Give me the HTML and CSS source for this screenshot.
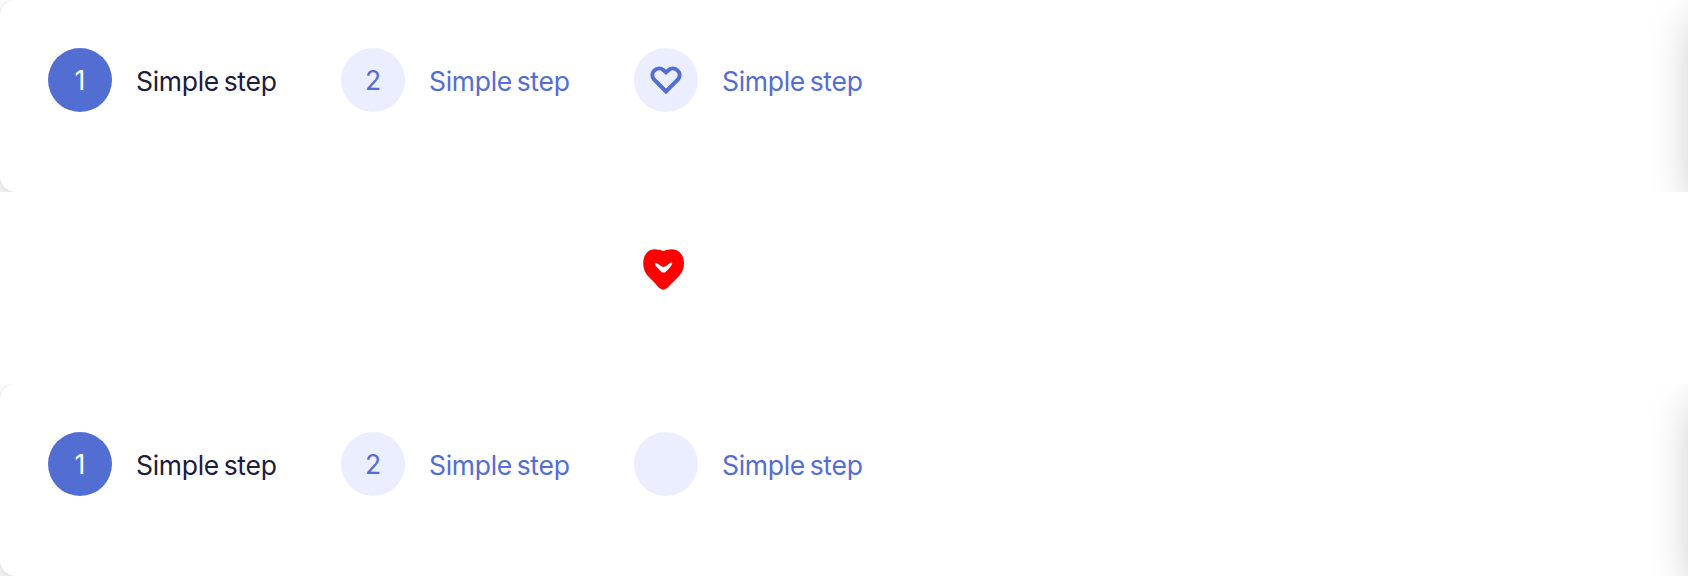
FILE: index.html
```
<!DOCTYPE html>
<html lang="en">
<head>
<meta charset="utf-8">
<title>Steps</title>
<link rel="stylesheet" href="styles.css">
</head>
<body>
<section class="frame">
  <div class="card">
    <div class="step step-active"><span class="badge">1</span><span class="label">Simple step</span></div>
    <div class="step"><span class="badge">2</span><span class="label">Simple step</span></div>
    <div class="step"><span class="badge"><svg class="heart" viewBox="0 0 40 40"><path d="M20 31.5 8 19.5A6.7 6.7 0 0 1 17.6 10.2L20 12.4 22.4 10.2A6.7 6.7 0 0 1 32 19.5Z"/></svg></span><span class="label">Simple step</span></div>
  </div>
</section>
<section class="frame diff">
  <svg class="mark" viewBox="0 0 48 48"><path d="M21 39.5Q23.3 41.8 25.5 39.5L29.5 35.5 37 28Q41 23 41 17.5C41 10.5 37 6.3 31.5 6.3Q26.5 6.3 23.3 8.5Q20 6.3 15 6.3C9.5 6.3 6.2 10.5 6.2 17.5Q6.2 23 10 28L17.5 35.5Z"/><path class="notch" d="M15 17.5Q15.5 16 19 18.5Q21 20.5 23.5 21Q26 20.5 28 18.5Q31.5 15.5 32.3 17Q32 19.5 28.5 23L25 26.5H22L18.5 23Q15 19.5 15 17.5Z"/></svg>
</section>
<section class="frame">
  <div class="card">
    <div class="step step-active"><span class="badge">1</span><span class="label">Simple step</span></div>
    <div class="step"><span class="badge">2</span><span class="label">Simple step</span></div>
    <div class="step"><span class="badge"></span><span class="label">Simple step</span></div>
  </div>
</section>
</body>
</html>
```
FILE: styles.css
```
* { box-sizing: border-box; }
body {
  margin: 0;
  background: #fff;
  font-family: Inter, "Liberation Sans", sans-serif;
  font-size: 26.5px;
}
.frame {
  position: relative;
  height: 192px;
  overflow: hidden;
}
.frame:not(.diff)::after {
  content: "";
  position: absolute;
  left: 100%;
  top: 0;
  width: 200px;
  height: 192px;
  border-radius: 16px;
  box-shadow: 0 16px 40px rgba(0, 0, 0, 0.18);
}
.card {
  display: flex;
  gap: 64px;
  height: 192px;
  padding: 48px;
  border-radius: 16px 0 0 16px;
  background: #fff;
  box-shadow: 0 16px 40px rgba(0, 0, 0, 0.16), 0 0 4px rgba(0, 0, 0, 0.08);
}
.step {
  display: flex;
  align-items: center;
  gap: 24px;
  width: 229px;
  height: 64px;
  color: #526ed3;
  white-space: nowrap;
}
.badge {
  display: flex;
  align-items: center;
  justify-content: center;
  flex: none;
  width: 64px;
  height: 64px;
  border-radius: 50%;
  background: #ebeeff;
}
.label {
  padding-top: 1px;
  letter-spacing: -0.3px;
  word-spacing: -2.4px;
}
.step-active { color: #1b1d3b; }
.step-active .badge { color: #fff; background: #526ed3; }
.heart { width: 40px; height: 40px; fill: none; stroke: #526ed3; stroke-width: 4; }
.diff { padding: 54px 0 0 640px; }
.mark { display: block; width: 48px; height: 48px; fill: red; stroke: red; stroke-width: 6; stroke-linejoin: round; }
.mark .notch { fill: #fff; stroke: none; }
.mark path { filter: blur(0.4px); }
```
